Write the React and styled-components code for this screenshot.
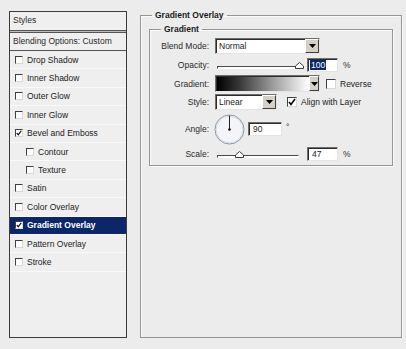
import React from "react";
import styled, { createGlobalStyle } from "styled-components";

const GlobalStyle = createGlobalStyle`
  html, body {
    margin: 0;
    padding: 0;
    background: #ececec;
  }
  body {
    font-family: "Liberation Sans", Arial, sans-serif;
    font-size: 8.5px;
    color: #1e1e1e;
  }
`;

const layers = [
  { name: "Drop Shadow" },
  { name: "Inner Shadow" },
  { name: "Outer Glow" },
  { name: "Inner Glow" },
  { name: "Bevel and Emboss", checked: true },
  { name: "Contour", indent: true },
  { name: "Texture", indent: true },
  { name: "Satin" },
  { name: "Color Overlay" },
  { name: "Gradient Overlay", checked: true, selected: true },
  { name: "Pattern Overlay" },
  { name: "Stroke" },
];

const Check = ({ checked, size = 8 }) => (
  <Box $size={size}>
    {checked && (
      <svg width={size - 2} height={size - 2} viewBox="0 0 8 8">
        <polyline points="1,4 3,6.5 7,1" fill="none" stroke="#000" strokeWidth="1.6" />
      </svg>
    )}
  </Box>
);

const Slider = ({ value, min = 0, max = 100 }) => {
  const pos = 2 + ((value - min) / (max - min)) * 82;
  return (
    <SliderWrap>
      <Track />
      <Thumb style={{ left: pos - 4 }}>
        <svg width="9" height="7" viewBox="0 0 9 7">
          <polygon points="4.5,0.5 8.5,4 8.5,6.5 0.5,6.5 0.5,4" fill="#fff" stroke="#3a3a3a" />
        </svg>
      </Thumb>
    </SliderWrap>
  );
};

const DropArrow = () => (
  <svg width="7" height="4" viewBox="0 0 7 4">
    <polygon points="0,0 7,0 3.5,4" fill="#000" />
  </svg>
);

const App = () => {
  return (
    <>
      <GlobalStyle />
      <Page>
        <StylesPanel>
          <PanelHeader>Styles</PanelHeader>
          <DoubleRule />
          <BlendRow>Blending Options: Custom</BlendRow>
          {layers.map((l) => (
            <LayerRow key={l.name} $indent={l.indent} $selected={l.selected}>
              <Check checked={l.checked} />
              <span>{l.name}</span>
            </LayerRow>
          ))}
        </StylesPanel>

        <OuterGroup>
          <Legend>Gradient Overlay</Legend>
          <InnerGroup>
            <Legend>Gradient</Legend>
            <Form>
              <Label>Blend Mode:</Label>
              <Select $width={105}>
                <span>Normal</span>
                <SelectButton>
                  <DropArrow />
                </SelectButton>
              </Select>

              <Label>Opacity:</Label>
              <Control>
                <Slider value={100} />
                <Field $gap={7}>
                  <Highlight>100</Highlight>
                </Field>
                <Unit>%</Unit>
              </Control>

              <Label>Gradient:</Label>
              <Control>
                <Swatch>
                  <Ramp />
                  <SmallButton>
                    <DropArrow />
                  </SmallButton>
                </Swatch>
                <CheckLabel $gap={6}>
                  <Check size={10} />
                  Reverse
                </CheckLabel>
              </Control>

              <Label>Style:</Label>
              <Control>
                <Select $width={62}>
                  <span>Linear</span>
                  <SelectButton>
                    <DropArrow />
                  </SelectButton>
                </Select>
                <CheckLabel $gap={10}>
                  <Check size={10} checked />
                  Align with Layer
                </CheckLabel>
              </Control>

              <Label>Angle:</Label>
              <Control>
                <Dial>
                  <svg width="31" height="31" viewBox="0 0 31 31">
                    <circle cx="15.5" cy="15.5" r="14.5" fill="#f4f5f8" stroke="#8a96ab" strokeWidth="1" />
                    <circle cx="15.5" cy="15.5" r="13.3" fill="none" stroke="#d6dbe5" strokeWidth="1" />
                    <line x1="15.5" y1="15.5" x2="15.5" y2="1.5" stroke="#222" strokeWidth="1" />
                    <circle cx="15.5" cy="15.5" r="1.3" fill="#111" />
                  </svg>
                </Dial>
                <Field $gap={3} $width={34}>
                  90
                </Field>
                <Degree>°</Degree>
              </Control>

              <Label>Scale:</Label>
              <Control>
                <Slider value={47} min={10} max={150} />
                <Field $gap={7}>47</Field>
                <Unit>%</Unit>
              </Control>
            </Form>
          </InnerGroup>
        </OuterGroup>
      </Page>
    </>
  );
};

export default App;

const Page = styled.div`
  display: flex;
  align-items: flex-start;
  gap: 13px;
  padding: 9px 0 0 9px;
`;

const StylesPanel = styled.div`
  box-sizing: border-box;
  width: 118px;
  height: 327px;
  margin-top: 2px;
  border: 1px solid #3b3b3b;
  background: #efefef;
  display: flex;
  flex-direction: column;
`;

const PanelHeader = styled.div`
  height: 18px;
  line-height: 17px;
  padding-left: 3px;
  color: #2a2a2a;
`;

const DoubleRule = styled.div`
  height: 1px;
  border-top: 1px solid #555;
  border-bottom: 1px solid #555;
  background: #bdbdbd;
`;

const BlendRow = styled.div`
  height: 17px;
  line-height: 17px;
  padding-left: 3px;
  border-bottom: 1px solid #555;
  color: #2a2a2a;
`;

const LayerRow = styled.div`
  box-sizing: border-box;
  height: 18.4px;
  display: flex;
  align-items: center;
  gap: 4px;
  padding-left: ${(p) => (p.$indent ? 16 : 5)}px;
  border-bottom: 1px solid #f9f9f9;
  background: ${(p) => (p.$selected ? "#0c2769" : "transparent")};
  color: ${(p) => (p.$selected ? "#fff" : "#222")};
  font-weight: ${(p) => (p.$selected ? "bold" : "normal")};
`;

const Box = styled.span`
  box-sizing: border-box;
  width: ${(p) => p.$size}px;
  height: ${(p) => p.$size}px;
  flex: none;
  display: inline-flex;
  align-items: center;
  justify-content: center;
  background: #fff;
  border: 1px solid;
  border-color: #404040 #d8d8d8 #d8d8d8 #404040;
`;

const OuterGroup = styled.fieldset`
  box-sizing: border-box;
  width: 262px;
  height: 329px;
  margin: 0;
  padding: 0;
  border: 1px solid #959595;
  box-shadow: inset 1px 1px 0 #fbfbfb, 1px 1px 0 #fbfbfb;
`;

const InnerGroup = styled.fieldset`
  box-sizing: border-box;
  margin: 2px 8px 0 8px;
  padding: 0;
  border: 1px solid #959595;
  box-shadow: inset 1px 1px 0 #fbfbfb, 1px 1px 0 #fbfbfb;
`;

const Legend = styled.legend`
  margin-left: 11px;
  padding: 0 3px;
  line-height: 12px;
  font-weight: bold;
  color: #1a1a1a;
`;

const Form = styled.div`
  display: grid;
  grid-template-columns: 60px 1fr;
  grid-template-rows: 16px 21px 17px 20px 34px 16px;
  column-gap: 5px;
  align-items: center;
  padding: 3px 0 3px 0;
`;

const Label = styled.div`
  text-align: right;
  padding-right: 1px;
  color: #2a2a2a;
`;

const Control = styled.div`
  display: flex;
  align-items: center;
`;

const Select = styled.div`
  box-sizing: border-box;
  width: ${(p) => p.$width}px;
  height: 16px;
  display: flex;
  align-items: center;
  justify-content: space-between;
  padding-left: 3px;
  background: #fff;
  border: 1px solid;
  border-color: #6e6e6e #e4e4e4 #e4e4e4 #6e6e6e;
  box-shadow: inset 1px 1px 0 #2c2c2c;
`;

const SelectButton = styled.div`
  box-sizing: border-box;
  width: 14px;
  height: 14px;
  display: flex;
  align-items: center;
  justify-content: center;
  background: #d4d0c8;
  border: 1px solid;
  border-color: #fff #404040 #404040 #fff;
`;

const SliderWrap = styled.div`
  position: relative;
  width: 85px;
  height: 10px;
  flex: none;
`;

const Track = styled.div`
  position: absolute;
  left: 2px;
  right: 1px;
  bottom: 1px;
  height: 1px;
  border: 1px solid;
  border-color: #4a4a4a #fff #fff #4a4a4a;
  background: #fff;
`;

const Thumb = styled.div`
  position: absolute;
  bottom: 1px;
  width: 9px;
  height: 7px;
  line-height: 0;
`;

const Field = styled.div`
  box-sizing: border-box;
  width: ${(p) => p.$width || 31}px;
  height: 14px;
  margin-left: ${(p) => p.$gap}px;
  padding: 0 0 0 4px;
  display: flex;
  align-items: center;
  background: #fff;
  border: 1px solid;
  border-color: #6e6e6e #e4e4e4 #e4e4e4 #6e6e6e;
  box-shadow: inset 1px 1px 0 #2c2c2c;
  color: #222;
`;

const Highlight = styled.span`
  background: #0c2769;
  color: #fff;
  line-height: 10px;
  padding: 0 1px;
  margin-left: -2px;
`;

const Unit = styled.span`
  margin-left: 5px;
  color: #333;
`;

const Degree = styled.span`
  margin-left: 4px;
  align-self: flex-start;
  margin-top: 8px;
  color: #333;
`;

const Swatch = styled.div`
  box-sizing: border-box;
  width: 105px;
  height: 17px;
  display: flex;
  border: 1px solid;
  border-color: #6e6e6e #e4e4e4 #e4e4e4 #6e6e6e;
  box-shadow: inset 1px 1px 0 #2c2c2c;
  background: #fff;
`;

const Ramp = styled.div`
  flex: 1;
  margin: 1px 0 0 1px;
  background: linear-gradient(to right, #000 0%, #3a3a3a 25%, #9a9a9a 60%, #fff 100%);
`;

const SmallButton = styled.div`
  box-sizing: border-box;
  width: 10px;
  display: flex;
  align-items: center;
  justify-content: center;
  background: #d4d0c8;
  border: 1px solid;
  border-color: #fff #404040 #404040 #fff;
`;

const CheckLabel = styled.label`
  display: flex;
  align-items: center;
  gap: 4px;
  margin-left: ${(p) => p.$gap}px;
  color: #222;
`;

const Dial = styled.div`
  width: 31px;
  height: 31px;
  margin-left: -1px;
  line-height: 0;
`;
